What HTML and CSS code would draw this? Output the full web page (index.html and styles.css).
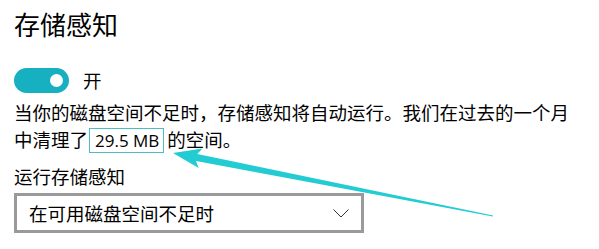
FILE: index.html
```html
<!DOCTYPE html>
<html lang="zh-CN">
<head>
<meta charset="utf-8">
<link rel="stylesheet" href="styles.css">
</head>
<body>
<div class="page">
  <h1 class="title">存储感知</h1>
  <div class="toggle-row">
    <span class="toggle"><span class="knob"></span></span>
    <span class="toggle-label">开</span>
  </div>
  <p class="desc"><span class="line">当你的磁盘空间不足时，存储感知将自动运行。我们在过去的一个月</span><span class="line">中清理了<span class="hl">29.5 MB</span>的空间。</span></p>
  <div class="label">运行存储感知</div>
  <div class="select">
    <span class="select-text">在可用磁盘空间不足时</span>
    <svg class="chev" width="16" height="9" viewBox="0 0 16 9"><path d="M0.5 0.5 L8 8 L15.5 0.5" fill="none" stroke="#333" stroke-width="1"/></svg>
  </div>
  <svg class="arrow" width="599" height="249" viewBox="0 0 599 249">
    <polygon fill="#22ccd2" points="173,153 202.4,148.5 197.3,154.1 493.1,215.4 492.9,216.6 196,160.9 198.6,168.1"/>
  </svg>
</div>
</body>
</html>
```
FILE: styles.css
```css
html, body {
  margin: 0;
  padding: 0;
  background: #ffffff;
}
.page {
  position: relative;
  width: 599px;
  height: 249px;
  overflow: hidden;
  padding-left: 14px;
  box-sizing: border-box;
  font-family: "Noto Sans CJK SC", "Noto Sans", sans-serif;
  color: #000;
}
.title {
  margin: 0;
  padding-top: 7px;
  font-size: 26px;
  font-weight: 400;
  line-height: 34px;
  height: 34px;
}
.toggle-row {
  display: flex;
  align-items: center;
  margin-top: 27px;
  height: 25px;
}
.toggle {
  width: 55px;
  height: 25px;
  border-radius: 13px;
  background: #16b0c0;
  display: flex;
  align-items: center;
  justify-content: flex-end;
  padding-right: 6px;
  box-sizing: border-box;
}
.knob {
  width: 13px;
  height: 13px;
  border-radius: 50%;
  background: #fff;
}
.toggle-label {
  margin-left: 14px;
  font-size: 18.5px;
  line-height: 25px;
}
.desc {
  margin: 6px 0 0 0;
  width: 580px;
  font-size: 18.5px;
  line-height: 27px;
}
.line {
  display: block;
  white-space: nowrap;
}
.hl {
  border: 1px solid #4dbcc8;
  padding: 0 4px 0 5px;
  margin: 0 3px 0 1px;
  font-family: "Open Sans", "Noto Sans", sans-serif;
  font-size: 17px;
  line-height: 24px;
}
.label {
  margin-top: 12px;
  font-size: 18.5px;
  line-height: 22px;
}
.select {
  margin-top: 6px;
  width: 350px;
  height: 40px;
  border: 3px solid #9a9a9a;
  box-sizing: border-box;
  display: flex;
  align-items: center;
  justify-content: space-between;
  padding: 0 12px 0 12px;
}
.select-text {
  font-size: 18.5px;
  line-height: 24px;
}
.chev {
  display: block;
}
.arrow {
  position: absolute;
  left: 0;
  top: 0;
  pointer-events: none;
}
```
